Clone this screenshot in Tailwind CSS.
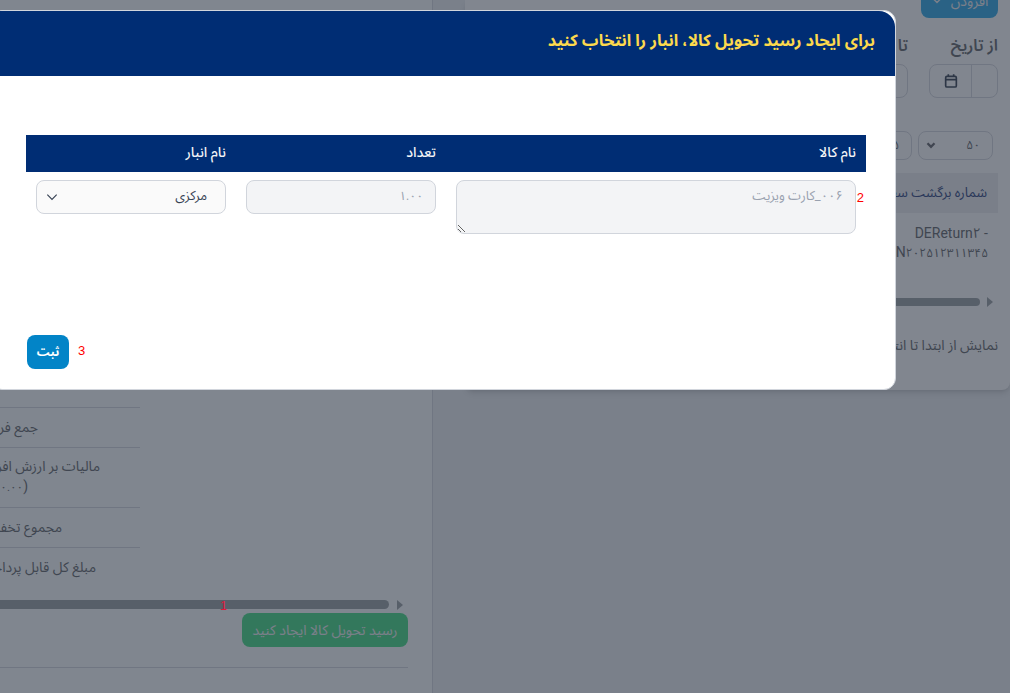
<!DOCTYPE html>
<html lang="fa" dir="rtl">

<head>
  <meta charset="UTF-8">
  <meta name="viewport" content="width=device-width, initial-scale=1.0">
  <title>رسید تحویل کالا</title>
  <script src="https://cdn.jsdelivr.net/npm/@tailwindcss/browser@4"></script>
</head>

<body class="relative h-[693px] w-[1010px] overflow-hidden bg-[#f0f5f6] text-sm text-[#71747a] font-['Roboto','Noto_Sans_Arabic','DejaVu_Sans',sans-serif]">
  <!-- Page behind the modal -->
  <div dir="ltr" class="flex h-full">
    <!-- Left column -->
    <section dir="rtl" class="flex h-full w-[433px] shrink-0 flex-col border-r border-gray-300 pt-[407px] pr-6">
      <div class="mr-[268px] w-[300px]">
        <div class="flex h-10 items-center border-t border-gray-300 pr-[102px] pb-[2px]"><span class="whitespace-nowrap">جمع فروش</span></div>
        <div class="flex h-[60px] flex-col justify-center border-t border-gray-300 pb-[2px] leading-5">
          <span class="pr-10 whitespace-nowrap">مالیات بر ارزش افزوده</span>
          <span class="pr-[112px] whitespace-nowrap">(<span class="text-[11.5px]">۱۰.۰۰</span></span>
        </div>
        <div class="flex h-10 items-center border-t border-gray-300 pr-[78px] pb-[2px]"><span class="whitespace-nowrap">مجموع تخفیف</span></div>
        <div class="flex h-10 items-center border-t border-gray-300 pr-11 pb-[2px]"><span class="whitespace-nowrap">مبلغ کل قابل پرداخت</span></div>
      </div>
      <div dir="ltr" class="mt-[13px] flex h-[9px] items-center justify-end gap-2 pr-[5px]">
        <div class="h-[9px] w-[420px] shrink-0 rounded-full bg-[#9fa6ab]"></div>
        <div class="h-0 w-0 shrink-0 border-y-[5px] border-l-[6px] border-y-transparent border-l-[#9fa6ab]"></div>
      </div>
      <div class="mt-[4px]"><button class="h-[34px] w-[166px] rounded-lg bg-[#57d891] text-gray-200">رسید تحویل کالا ایجاد کنید</button></div>
      <div class="mt-5 border-t border-gray-300"></div>
    </section>

    <!-- Right column -->
    <section dir="rtl" class="flex-1 bg-[#e4e8ec] pl-8">
      <div class="flow-root h-[390px] rounded-b-lg bg-gray-100 pr-3 shadow-md">
        <div class="-mt-4 flex h-[34px] justify-start">
          <button class="flex h-[34px] w-[77px] items-center justify-center gap-2 rounded-lg bg-[#44ace2] text-gray-200">افزودن
            <svg class="h-3 w-3" viewBox="0 0 24 24" fill="none" stroke="currentColor" stroke-width="3"><path d="M6 9l6 6 6-6"/></svg>
          </button>
        </div>
        <div class="mt-[17px] flex gap-[21px]">
          <div class="w-[69px]">
            <div class="whitespace-nowrap text-[16px] font-semibold">از تاریخ</div>
            <div class="mt-[6px] flex h-[34px] rounded-lg border border-gray-300">
              <div class="w-[26px] border-l border-gray-300"></div>
              <div class="flex flex-1 items-center justify-center">
                <svg class="h-4 w-4 text-gray-600" viewBox="0 0 24 24" fill="none" stroke="currentColor" stroke-width="2.5"><rect x="4" y="5" width="16" height="16" rx="2"/><path d="M4 10h16M8 2v4M16 2v4"/></svg>
              </div>
            </div>
          </div>
          <div class="w-[69px]">
            <div class="whitespace-nowrap text-[16px] font-semibold">تا تاریخ</div>
            <div class="mt-[6px] h-[34px] rounded-lg border border-gray-300"></div>
          </div>
        </div>
        <div class="mt-[33px] flex gap-[6px] pr-[5px]">
          <div class="flex h-[29px] w-[75px] items-center justify-between rounded-lg border border-gray-300 pr-3 pl-[5px]">
            <span class="text-xs">۵۰</span>
            <svg class="h-[14px] w-[14px]" viewBox="0 0 24 24" fill="none" stroke="currentColor" stroke-width="4"><path d="M6 9l6 6 6-6"/></svg>
          </div>
          <div class="flex h-[29px] w-[75px] items-center rounded-lg border border-gray-300 px-3"><span class="text-xs">۵</span></div>
        </div>
        <div class="mt-[13px] flex h-10 items-center border border-gray-200 bg-gray-200 px-[10px] text-[13.5px] whitespace-nowrap text-[#46598c]">شماره برگشت سفارش</div>
        <div dir="ltr" class="mt-[11px] flex flex-col items-end pr-[10px] leading-[19px]">
          <span class="whitespace-nowrap text-[14px]">DEReturn۲ -</span>
          <span class="whitespace-nowrap text-[14px]">N<span class="text-[12px]">۲۰۲۵۱۲۳۱۱۳۴۵</span></span>
        </div>
        <div dir="ltr" class="mt-[34px] flex items-center justify-end gap-[7px] pr-[5px]">
          <div class="h-2 w-[300px] rounded-full bg-[#9fa6ab]"></div>
          <div class="h-0 w-0 border-y-[5px] border-l-[6px] border-y-transparent border-l-[#9fa6ab]"></div>
        </div>
        <div class="mt-7 whitespace-nowrap">نمایش از ابتدا تا انتها</div>
      </div>
    </section>
  </div>

  <!-- Backdrop -->
  <div class="absolute inset-0 bg-gray-900/50"></div>
  <span class="absolute top-[597px] left-[220px] text-[13px] text-[#e0183c] font-['Liberation_Sans']">1</span>

  <!-- Modal -->
  <div class="absolute top-[10px] left-[-10px] h-[380px] w-[906px] rounded-xl border border-gray-300 bg-white">
    <div class="flex h-[65px] items-center rounded-tr-2xl bg-[#002d74] pr-5 pb-[6px]">
      <h2 class="text-[16.5px] font-bold text-[#fcd94d]">برای ایجاد رسید تحویل کالا، انبار را انتخاب کنید</h2>
    </div>

    <div class="relative mt-[59px] mr-[29px] w-[840px]">
      <div class="grid h-[37px] grid-cols-[420px_210px_210px] items-center bg-[#002d74] pb-[3px] text-sm font-medium text-gray-100">
        <div class="px-[10px]">نام کالا</div>
        <div class="px-[10px]">تعداد</div>
        <div class="px-[10px]">نام انبار</div>
      </div>
      <div class="grid grid-cols-[420px_210px_210px] pt-2">
        <div class="px-[10px]">
          <textarea disabled class="block h-[54px] w-full rounded-lg border border-gray-300 bg-gray-100 px-3 py-[6px] text-[13px] text-gray-400">۰۰۶_کارت ویزیت</textarea>
        </div>
        <div class="px-[10px]">
          <input disabled value="۱.۰۰" class="block h-[34px] w-full rounded-lg border border-gray-300 bg-gray-100 px-3 pb-[2px] text-xs text-gray-400">
        </div>
        <div class="relative px-[10px]">
          <select class="block h-[34px] w-full appearance-none rounded-lg border border-gray-300 bg-[#fafafa] px-[18px] pb-[1px] text-[13px] text-gray-700">
            <option>مرکزی</option>
          </select>
          <svg class="absolute top-[10px] left-[19px] h-[14px] w-[14px] text-gray-700" viewBox="0 0 24 24" fill="none" stroke="currentColor" stroke-width="2"><path d="M4 8l8 8 8-8"/></svg>
        </div>
      </div>
      <span class="absolute top-[54px] right-[2px] text-[13px] text-[#ff0000] font-['Liberation_Sans']">2</span>
    </div>

    <div class="mt-[101px] flex items-center gap-[9px] pl-[36px]" dir="ltr">
      <button class="h-[34px] w-[42px] rounded-lg bg-[#0284c7] text-xs font-bold text-white">ثبت</button>
      <span class="mb-[2px] text-[13px] text-[#ff0000] font-['Liberation_Sans']">3</span>
    </div>
  </div>
</body>

</html>
